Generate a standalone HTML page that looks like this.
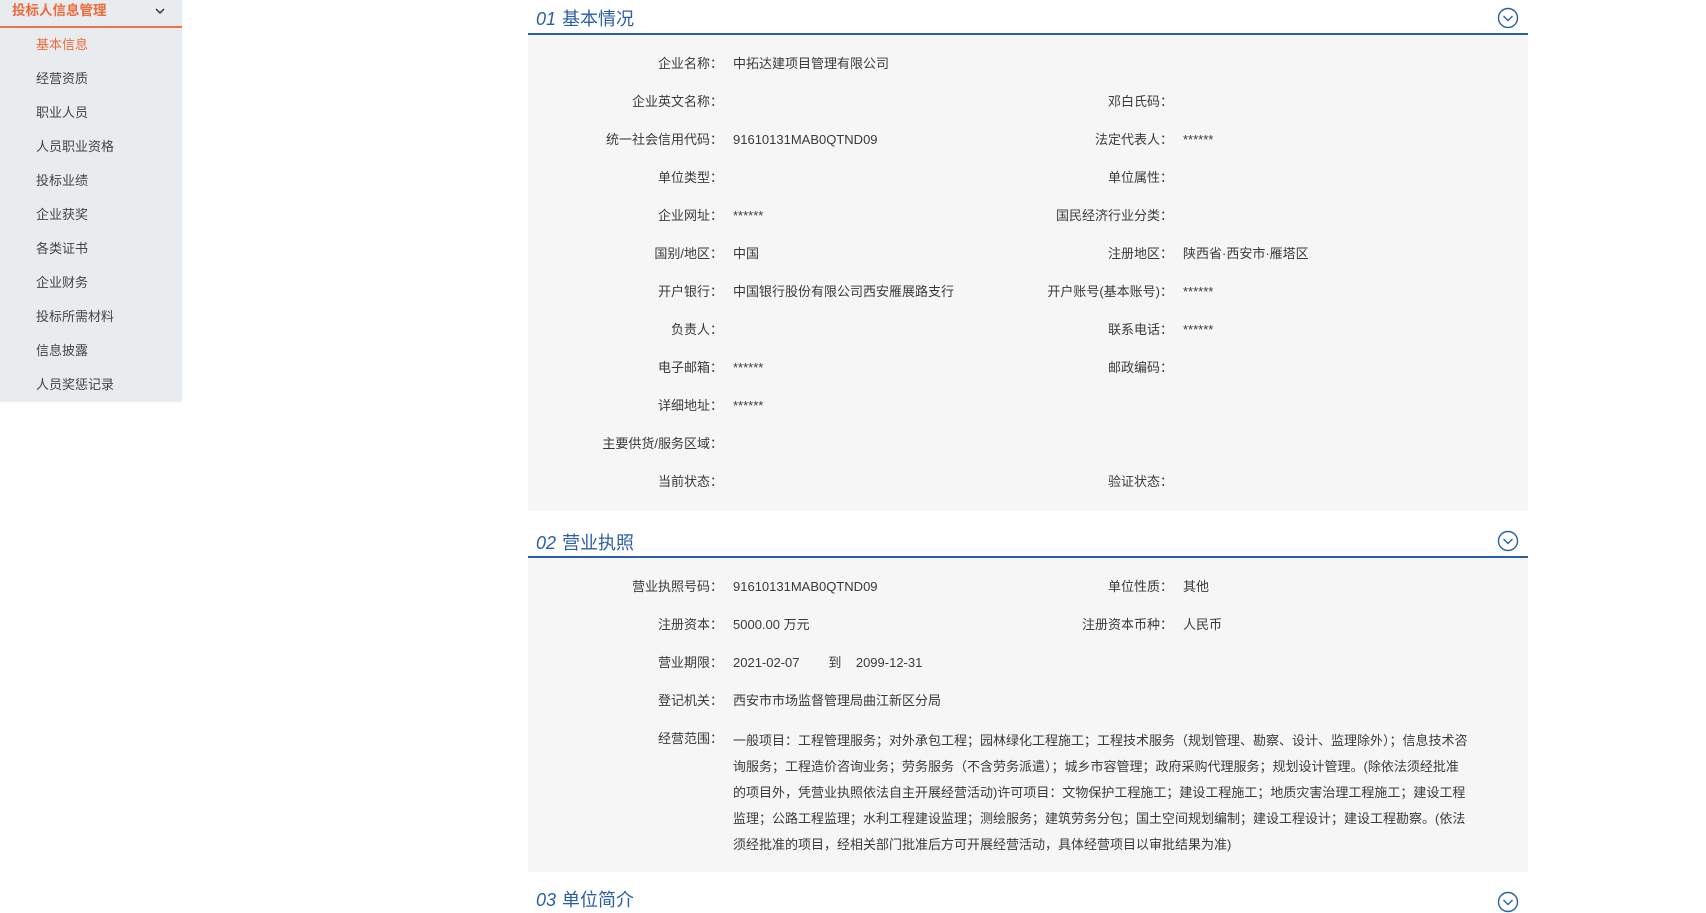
<!DOCTYPE html>
<html><head><meta charset="utf-8"><style>
*{margin:0;padding:0;box-sizing:border-box}
body{width:1706px;height:903px;overflow:hidden;background:#fff;font-family:"Liberation Sans","Noto Sans CJK SC",sans-serif;font-size:13px;color:#3a3a3a;position:relative}
.side{position:absolute;left:0;top:0;width:182px;height:402px;background:#e9ecef}
.sh{position:absolute;left:0;top:0;width:182px;height:28px;border-bottom:2px solid #f07048;color:#f06a3e;font-weight:bold;font-size:13.5px;line-height:22px;padding-left:12px}
.sh svg{position:absolute;left:154px;top:6px}
.si{position:absolute;left:36px;font-size:13px;color:#444;line-height:16px}
.a{position:absolute;white-space:nowrap;line-height:16px}
.l{text-align:right;width:300px}
.panel{position:absolute;left:528px;width:1000px;background:#f6f6f6}
.title{position:absolute;left:536px;font-size:18px;color:#2b5ea8;line-height:22px;white-space:nowrap}
.title i{font-family:"Liberation Sans",sans-serif;margin-right:6px}
.hl{position:absolute;left:528px;width:1000px;height:2px;background:#2b5ea8}
.scope{position:absolute;left:733px;top:728px;line-height:26.1px;white-space:nowrap;font-size:13px}
</style></head><body>
<div class="side">
<div class="sh">投标人信息管理<svg width="12" height="10" viewBox="0 0 12 10"><path d="M2 3l4 4 4-4" fill="none" stroke="#333" stroke-width="1.5"/></svg></div>
<div class="si" style="top:37px;color:#f06a3e">基本信息</div>
<div class="si" style="top:71px">经营资质</div>
<div class="si" style="top:105px">职业人员</div>
<div class="si" style="top:139px">人员职业资格</div>
<div class="si" style="top:173px">投标业绩</div>
<div class="si" style="top:207px">企业获奖</div>
<div class="si" style="top:241px">各类证书</div>
<div class="si" style="top:275px">企业财务</div>
<div class="si" style="top:309px">投标所需材料</div>
<div class="si" style="top:343px">信息披露</div>
<div class="si" style="top:377px">人员奖惩记录</div>
</div>

<div class="title" style="top:8px"><i>01</i>基本情况</div>
<div class="hl" style="top:33px"></div>
<svg style="position:absolute;left:1497px;top:7px" width="22" height="22" viewBox="0 0 22 22"><circle cx="11" cy="11" r="9.5" fill="none" stroke="#2b5ea8" stroke-width="1.4"/><path d="M6.5 9l4.5 4.5L15.5 9" fill="none" stroke="#2b5ea8" stroke-width="1.4"/></svg>
<div class="panel" style="top:35px;height:476px"></div>

<div class="a l" style="left:423px;top:56px">企业名称：</div><div class="a" style="left:733px;top:56px">中拓达建项目管理有限公司</div>
<div class="a l" style="left:423px;top:94px">企业英文名称：</div><div class="a l" style="left:873px;top:94px">邓白氏码：</div>
<div class="a l" style="left:423px;top:132px">统一社会信用代码：</div><div class="a" style="left:733px;top:132px">91610131MAB0QTND09</div><div class="a l" style="left:873px;top:132px">法定代表人：</div><div class="a" style="left:1183px;top:132px">******</div>
<div class="a l" style="left:423px;top:170px">单位类型：</div><div class="a l" style="left:873px;top:170px">单位属性：</div>
<div class="a l" style="left:423px;top:208px">企业网址：</div><div class="a" style="left:733px;top:208px">******</div><div class="a l" style="left:873px;top:208px">国民经济行业分类：</div>
<div class="a l" style="left:423px;top:246px">国别/地区：</div><div class="a" style="left:733px;top:246px">中国</div><div class="a l" style="left:873px;top:246px">注册地区：</div><div class="a" style="left:1183px;top:246px">陕西省·西安市·雁塔区</div>
<div class="a l" style="left:423px;top:284px">开户银行：</div><div class="a" style="left:733px;top:284px">中国银行股份有限公司西安雁展路支行</div><div class="a l" style="left:873px;top:284px">开户账号(基本账号)：</div><div class="a" style="left:1183px;top:284px">******</div>
<div class="a l" style="left:423px;top:322px">负责人：</div><div class="a l" style="left:873px;top:322px">联系电话：</div><div class="a" style="left:1183px;top:322px">******</div>
<div class="a l" style="left:423px;top:360px">电子邮箱：</div><div class="a" style="left:733px;top:360px">******</div><div class="a l" style="left:873px;top:360px">邮政编码：</div>
<div class="a l" style="left:423px;top:398px">详细地址：</div><div class="a" style="left:733px;top:398px">******</div>
<div class="a l" style="left:423px;top:436px">主要供货/服务区域：</div>
<div class="a l" style="left:423px;top:474px">当前状态：</div><div class="a l" style="left:873px;top:474px">验证状态：</div>

<div class="title" style="top:532px"><i>02</i>营业执照</div>
<div class="hl" style="top:556px"></div>
<svg style="position:absolute;left:1497px;top:530px" width="22" height="22" viewBox="0 0 22 22"><circle cx="11" cy="11" r="9.5" fill="none" stroke="#2b5ea8" stroke-width="1.4"/><path d="M6.5 9l4.5 4.5L15.5 9" fill="none" stroke="#2b5ea8" stroke-width="1.4"/></svg>
<div class="panel" style="top:558px;height:314px"></div>

<div class="a l" style="left:423px;top:579px">营业执照号码：</div><div class="a" style="left:733px;top:579px">91610131MAB0QTND09</div><div class="a l" style="left:873px;top:579px">单位性质：</div><div class="a" style="left:1183px;top:579px">其他</div>
<div class="a l" style="left:423px;top:617px">注册资本：</div><div class="a" style="left:733px;top:617px">5000.00 万元</div><div class="a l" style="left:873px;top:617px">注册资本币种：</div><div class="a" style="left:1183px;top:617px">人民币</div>
<div class="a l" style="left:423px;top:655px">营业期限：</div><div class="a" style="left:733px;top:655px">2021-02-07 &nbsp; &nbsp; &nbsp; &nbsp;到 &nbsp; &nbsp;2099-12-31</div>
<div class="a l" style="left:423px;top:693px">登记机关：</div><div class="a" style="left:733px;top:693px">西安市市场监督管理局曲江新区分局</div>
<div class="a l" style="left:423px;top:731px">经营范围：</div>
<div class="scope">一般项目：工程管理服务；对外承包工程；园林绿化工程施工；工程技术服务（规划管理、勘察、设计、监理除外）；信息技术咨<br>询服务；工程造价咨询业务；劳务服务（不含劳务派遣）；城乡市容管理；政府采购代理服务；规划设计管理。(除依法须经批准<br>的项目外，凭营业执照依法自主开展经营活动)许可项目：文物保护工程施工；建设工程施工；地质灾害治理工程施工；建设工程<br>监理；公路工程监理；水利工程建设监理；测绘服务；建筑劳务分包；国土空间规划编制；建设工程设计；建设工程勘察。(依法<br>须经批准的项目，经相关部门批准后方可开展经营活动，具体经营项目以审批结果为准)</div>

<div class="title" style="top:889px"><i>03</i>单位简介</div>
<svg style="position:absolute;left:1497px;top:891px" width="22" height="22" viewBox="0 0 22 22"><circle cx="11" cy="11" r="9.5" fill="none" stroke="#2b5ea8" stroke-width="1.4"/><path d="M6.5 9l4.5 4.5L15.5 9" fill="none" stroke="#2b5ea8" stroke-width="1.4"/></svg>
</body></html>
